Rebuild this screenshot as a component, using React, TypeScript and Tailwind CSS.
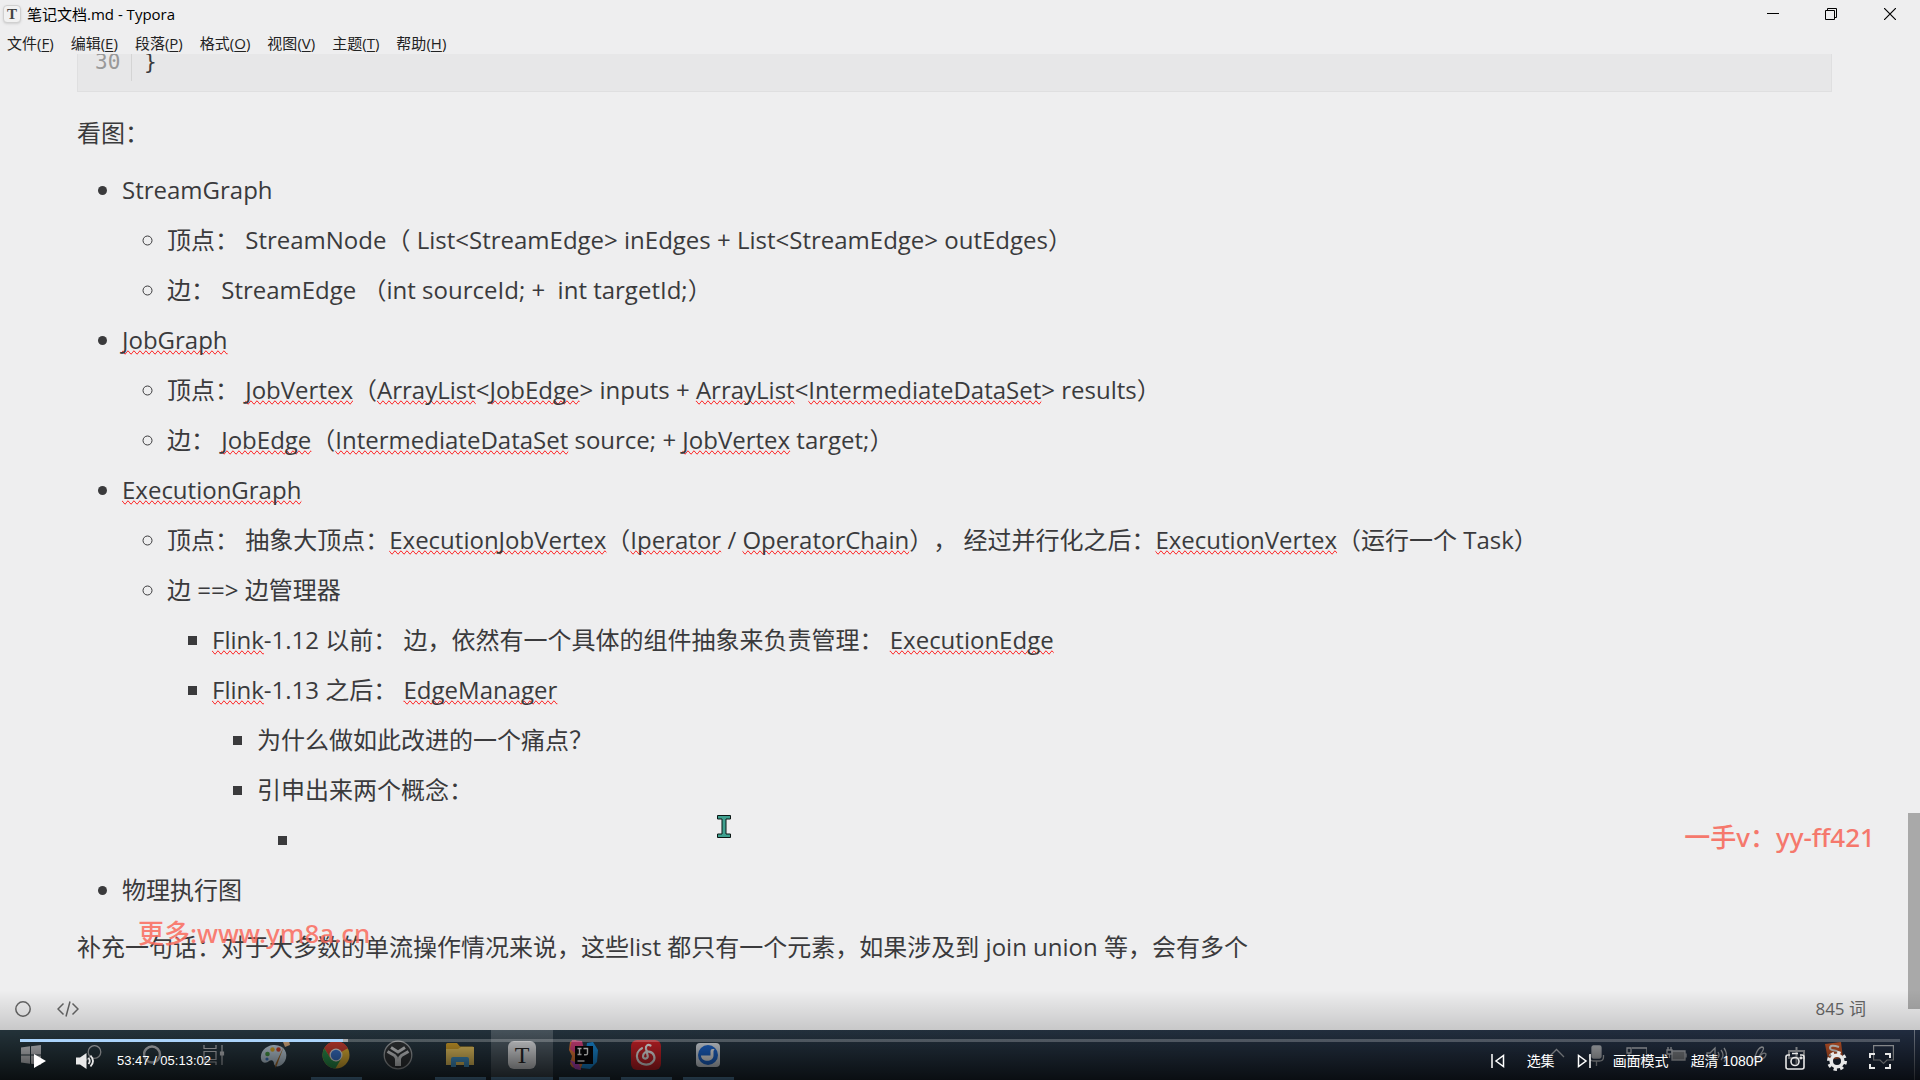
import React, { useState } from "react";

const Err = ({ children }: { children: React.ReactNode }) => (
  <span className="decoration-[#d8201c] [text-decoration-line:spelling-error]">{children}</span>
);

const menus: [string, string][] = [
  ["文件", "F"],
  ["编辑", "E"],
  ["段落", "P"],
  ["格式", "O"],
  ["视图", "V"],
  ["主题", "T"],
  ["帮助", "H"],
];

function TitleBar() {
  return (
    <header className="flex h-7 shrink-0 items-center justify-between pl-[3px]">
      <div className="flex items-center gap-1.5">
        <span className="flex size-[18px] items-center justify-center rounded border border-[#d0d0d0] bg-[#f1f1f1] font-['Liberation_Serif',serif] text-[15px] font-bold leading-none text-[#444] shadow-sm">
          T
        </span>
        <h1 className="text-[15px] leading-5 text-black">笔记文档.md - Typora</h1>
      </div>
      <div className="flex h-full">
        <button aria-label="最小化" className="flex w-[58px] items-center justify-center">
          <svg width="12" height="12" viewBox="0 0 12 12"><path d="M0 5.500h12" stroke="#000" /></svg>
        </button>
        <button aria-label="还原" className="flex w-[58px] items-center justify-center">
          <svg width="12" height="12" viewBox="0 0 12 12" fill="none" stroke="#000">
            <path d="M.5 2.500h9v9h-9zM2.500 2V.5h9v9H10" />
          </svg>
        </button>
        <button aria-label="关闭" className="flex w-[60px] items-center justify-center">
          <svg width="12" height="12" viewBox="0 0 12 12" stroke="#000" strokeWidth="1.200"><path d="M0 0l12 12M12 0L0 12" /></svg>
        </button>
      </div>
    </header>
  );
}

function MenuBar() {
  return (
    <nav className="flex h-[26px] shrink-0 items-center gap-[17px] pl-[7px] pt-1 text-[15px] leading-5 text-[#222]">
      {menus.map(([name, key]) => (
        <button key={key}>
          {name}(<span className="underline underline-offset-2">{key}</span>)
        </button>
      ))}
    </nav>
  );
}

const list = "flex flex-col gap-3 pl-[45px]";
const sub = "mt-3 flex flex-col gap-3 pl-[45px]";

function Document() {
  return (
    <article className="min-w-0 flex-1 overflow-hidden pl-[77px] pr-[76px] text-2xl leading-[38px] text-[#3a3a3c]">
      <pre className="flex border-x border-b border-[#dfdfe0] bg-[#e7e7e8] pb-[10px] font-['DejaVu_Sans_Mono',monospace] text-[21px] leading-4">
        <span className="w-[54px] border-r border-[#d4d4d4] pb-[11px] pl-[17px] text-[#999]">30</span>
        <code className="pl-3 font-['DejaVu_Sans_Mono',monospace]">{"}"}</code>
      </pre>
      <p className="mt-[22px]">看图：</p>
      <ul className={`${list} mt-[19px] list-disc`}>
        <li>
          StreamGraph
          <ul className={`${sub} list-[circle]`}>
            <li>顶点： StreamNode（ List&lt;StreamEdge&gt; inEdges + List&lt;StreamEdge&gt; outEdges）</li>
            <li>边： StreamEdge （int sourceId; + &nbsp;int targetId;）</li>
          </ul>
        </li>
        <li>
          <Err>JobGraph</Err>
          <ul className={`${sub} list-[circle]`}>
            <li>
              顶点： <Err>JobVertex</Err>（<Err>ArrayList</Err>&lt;<Err>JobEdge</Err>&gt; inputs + <Err>ArrayList</Err>&lt;
              <Err>IntermediateDataSet</Err>&gt; results）
            </li>
            <li>
              边： <Err>JobEdge</Err>（<Err>IntermediateDataSet</Err> source; + <Err>JobVertex</Err> target;）
            </li>
          </ul>
        </li>
        <li>
          <Err>ExecutionGraph</Err>
          <ul className={`${sub} list-[circle]`}>
            <li>
              顶点： 抽象大顶点：<Err>ExecutionJobVertex</Err>（<Err>Iperator</Err> / <Err>OperatorChain</Err>）， 经过并行化之后：
              <Err>ExecutionVertex</Err>（运行一个 Task）
            </li>
            <li>
              边 ==&gt; 边管理器
              <ul className={`${sub} list-[square]`}>
                <li>
                  <Err>Flink</Err>-1.12 以前： 边，依然有一个具体的组件抽象来负责管理： <Err>ExecutionEdge</Err>
                </li>
                <li>
                  <Err>Flink</Err>-1.13 之后： <Err>EdgeManager</Err>
                  <ul className={`${sub} list-[square]`}>
                    <li>为什么做如此改进的一个痛点？</li>
                    <li>
                      引申出来两个概念：
                      <ul className={`${sub} list-[square]`}>
                        <li>&nbsp;</li>
                      </ul>
                    </li>
                  </ul>
                </li>
              </ul>
            </li>
          </ul>
        </li>
        <li>物理执行图</li>
      </ul>
      <p className="mt-[19px]">补充一句话：对于大多数的单流操作情况来说，这些list 都只有一个元素，如果涉及到 join union 等，会有多个</p>
    </article>
  );
}

function StatusBar() {
  return (
    <footer className="flex h-[42px] shrink-0 items-center justify-between pl-[15px] pr-[42px] text-[#666]">
      <div className="flex items-center gap-[26px]">
        <button aria-label="大纲">
          <svg className="block" width="16" height="16" viewBox="0 0 16 16" fill="none" stroke="currentColor" strokeWidth="1.500"><circle cx="8" cy="8" r="7.200" /></svg>
        </button>
        <button aria-label="源代码模式">
          <svg className="block" width="22" height="16" viewBox="0 0 22 16" fill="none" stroke="currentColor" strokeWidth="1.500">
            <path d="M6.500 2.500L1 8l5.500 5.500M15.500 2.500L21 8l-5.500 5.500M13 .5L9 15.500" />
          </svg>
        </button>
      </div>
      <span className="text-[17px] leading-6">845 词</span>
    </footer>
  );
}

const apps = [
  {
    name: "Chrome",
    open: true,
    icon: (
      <svg width="28" height="28" viewBox="0 0 28 28">
        <circle cx="14" cy="14" r="13.500" fill="#f5c23a" />
        <path d="M14 14L2.300 7.250A13.500 13.500 0 0 1 25.700 7.250z" fill="#dc4437" />
        <path d="M14 7.500h12A13.500 13.500 0 0 0 2.300 7.250L8.400 17.300z" fill="#dc4437" />
        <path d="M2.300 7.250A13.500 13.500 0 0 0 13.400 27.500L19.500 17.300 14 20.500 8.400 17.300z" fill="#2f9e54" />
        <circle cx="14" cy="14" r="6.500" fill="#f2f2f2" />
        <circle cx="14" cy="14" r="5.200" fill="#3e7fe0" />
      </svg>
    ),
  },
  {
    name: "Yin",
    open: false,
    icon: (
      <svg width="30" height="30" viewBox="0 0 30 30" fill="none">
        <circle cx="15" cy="15" r="13.800" fill="#34383b" stroke="#a9aeb1" strokeWidth="1.300" />
        <g stroke="#dfe2e4" strokeWidth="3">
          <path d="M4.500 11.500l7 4q2 1.500 2 4V26M25.500 11.500l-7 4q-2 1.500-2 4V26M8 7.500l7 4.500 7-4.500" />
        </g>
      </svg>
    ),
  },
  {
    name: "文件资源管理器",
    open: true,
    icon: (
      <svg width="28" height="24" viewBox="0 0 28 24">
        <path d="M0 1.500Q0 0 1.500 0H11l3 3.500h12.500Q28 3.500 28 5v17H0z" fill="#e0ab2d" />
        <path d="M0 6h12l3-2h13v18H0z" fill="#fcd668" />
        <path d="M5 24v-8q0-2 2-2h14q2 0 2 2v8h-5v-5h-8v5z" fill="#4aa3dc" />
      </svg>
    ),
  },
  {
    name: "Typora",
    open: true,
    active: true,
    icon: (
      <span className="flex size-7 items-center justify-center rounded-md bg-[#eef0f3] font-['Liberation_Serif',serif] text-2xl leading-none text-[#2a2a2a]">T</span>
    ),
  },
  {
    name: "IntelliJ IDEA",
    open: true,
    icon: (
      <svg width="30" height="30" viewBox="0 0 30 30">
        <path d="M1 2l5-2 6 3 3 5v14l-4 8-8-3L1 24l2-8-3-6z" fill="#f4813a" />
        <path d="M3 0l10 1 2 8-9 4-5-4z" fill="#e8478b" />
        <path d="M18 3l6-1 5 8-1 12-7 7-9-1 4-10z" fill="#1b96ea" />
        <path d="M1 20l9 4 2 6-6-1z" fill="#c74bd0" />
        <rect x="6" y="6" width="18" height="18" fill="#08080c" />
        <path d="M8.500 8.500h4M10.500 8.500v6M8.500 14.500h4M14.500 8.500h4v5q0 1.200-1.500 1.200h-2M8.500 21h7" fill="none" stroke="#fff" strokeWidth="1.400" />
      </svg>
    ),
  },
  {
    name: "网易云音乐",
    open: true,
    icon: (
      <svg width="30" height="30" viewBox="0 0 30 30">
        <rect width="30" height="30" rx="6" fill="#e0252c" />
        <path d="M19.500 5.500c-3-1.500-5 .5-4.500 3l1.700 7.500c.6 3-4.700 4-4.700.2 0-3.200 3-5 5.800-4.500 5.700 1 7.200 6.500 4 10-4 4.500-13 3.700-15.300-2.500-1.600-4.700.5-9 4.500-11" fill="none" stroke="#fff" strokeWidth="2.200" strokeLinecap="round" />
      </svg>
    ),
  },
  {
    name: "Docker",
    open: true,
    icon: (
      <svg width="24" height="24" viewBox="0 0 24 24">
        <rect width="24" height="24" rx="4" fill="#e6edf5" />
        <circle cx="12" cy="12" r="10" fill="#1f6fe0" />
        <path d="M5 12.500h9.500V8q0-2 2-2h2l-1 2v4.500c0 7-12.500 7-12.500 0z" fill="#fff" />
      </svg>
    ),
  },
];

const system = [
  {
    name: "开始",
    icon: (
      <svg width="20" height="20" viewBox="0 0 20 20" fill="#d4d6da"><path d="M0 2.500l9-1.200v8.200H0zM10 1.200L20 0v9.500H10zM0 10.500h9v8.200l-9-1.200zM10 10.500h10V20l-10-1.200z" /></svg>
    ),
  },
  {
    name: "搜索",
    icon: (
      <svg width="20" height="20" viewBox="0 0 20 20" fill="none" stroke="#c9ccd0" strokeWidth="1.300"><circle cx="12.500" cy="7" r="6.300" /><path d="M8 11.500L.5 19" /></svg>
    ),
  },
  {
    name: "Cortana",
    icon: (
      <svg width="20" height="20" viewBox="0 0 20 20" fill="none" stroke="#c9ccd0" strokeWidth="2.500"><circle cx="9" cy="9.500" r="8" /></svg>
    ),
  },
  {
    name: "任务视图",
    icon: (
      <svg width="22" height="20" viewBox="0 0 22 20" fill="none" stroke="#c9ccd0" strokeWidth="1.200">
        <path d="M1 0v3.500h12V0M1 6.500h12v8H1zM1 20v-3h12v3M19 0v20" /><path d="M17.500 7h3v3h-3z" fill="#c9ccd0" />
      </svg>
    ),
  },
  {
    name: "画图",
    icon: (
      <svg width="30" height="28" viewBox="0 0 30 28">
        <path d="M13 4C5 5 0 11 1 18c1 5 6 4 8 2 3-2 5 0 5 3 1 4 8 3 11-3 4-8-1-17-12-16z" fill="#cfe2f1" />
        <circle cx="7.500" cy="13" r="2.300" fill="#4ca64c" /><circle cx="12.500" cy="8.500" r="2.200" fill="#e8b52c" /><circle cx="18.500" cy="8.500" r="2.200" fill="#d9482f" /><circle cx="7" cy="18" r="1.600" fill="#3f7fd0" />
        <path d="M24 5l-7 19-2 3 .5-4z" fill="#b8762c" /><path d="M23 1l6-1 1 4-5 2z" fill="#e8b98a" />
      </svg>
    ),
  },
];

const tray = [
  { name: "显示隐藏的图标", svg: <path d="M3 12l7.500-7.500L18 12" /> },
  { name: "麦克风", svg: <><rect x="6" y="1" width="9" height="12" rx="1.500" fill="#c9ccd0" /><path d="M3.500 10v2q0 4 4 4h6q4 0 4-4v-2M10.500 16v5" /></> },
  { name: "触摸键盘", svg: <><path d="M6 3h15v11H3" /><path d="M1 3h4v5H1zM3 8v8h10" /></> },
  { name: "电池", svg: <><path d="M6 6h13v9H6z" fill="#8b8f94" /><path d="M20 8.500v4M1 5h5v4H1zM2 2v3M5 2v3M3.500 9v4" /></> },
  { name: "音量", svg: <><path d="M1 8h3l5-5v14l-5-5H1z" /><path d="M12 7q2 3 0 6M15 5q4 5 0 10M18 3q5 7 0 14" /></> },
  { name: "手写", svg: <path d="M5 17q3-2 5-8t6-7q3 0 0 5t-6 7q-3 1-1-3M12 14q5-8 8-5 0 4-6 6" /> },
  { name: "输入法", svg: <><path d="M3 6h15v7H3zM10.500 2v17" strokeWidth="2" /></> },
];

function Taskbar() {
  return (
    <div className="flex h-[50px] shrink-0 justify-between bg-linear-to-r from-[#2a3c44] to-[#27344b]">
      <div className="flex">
        <div className="flex w-[305px]">
          {system.map((s) => (
            <button key={s.name} aria-label={s.name} className="flex flex-1 items-center justify-center">{s.icon}</button>
          ))}
        </div>
        {apps.map((a) => (
          <button key={a.name} aria-label={a.name} className={a.active ? "flex w-[62px] flex-col items-center bg-white/20" : "flex w-[62px] flex-col items-center"}>
            <span className="flex flex-1 items-center pt-[3px]">{a.icon}</span>
            <span className={a.active ? "h-[3px] w-full bg-[#76b9ed]" : a.open ? "h-[3px] w-[51px] bg-[#76b9ed]" : "h-[3px]"} />
          </button>
        ))}
      </div>
      <div className="flex items-stretch">
        {tray.map((t) => (
          <button key={t.name} aria-label={t.name} className="flex w-10 items-center justify-center">
            <svg width="21" height="21" viewBox="0 0 21 21" fill="none" stroke="#c4c8ce" strokeWidth="1.300">{t.svg}</svg>
          </button>
        ))}
        <button aria-label="搜狗输入法" className="flex w-9 items-center justify-center pb-2">
          <svg width="18" height="18" viewBox="0 0 18 18"><path d="M0 2l16-2 2 16-15 2z" fill="#e2622f" /><path d="M14 5q-9-3-9 1 0 2 4.500 2.500T13 12q-1 3-9 1" fill="none" stroke="#fff" strokeWidth="2" /></svg>
        </button>
        <button aria-label="通知" className="flex w-[62px] items-center justify-center">
          <svg width="21" height="20" viewBox="0 0 21 20" fill="none" stroke="#c9ccd0" strokeWidth="1.200"><path d="M.6.6h19.800V15h-6.400l-3.500 3.500L7 15H.6z" /></svg>
        </button>
        <span className="w-[6px] border-l border-white/40" />
      </div>
    </div>
  );
}

function Player() {
  const [time, setTime] = useState(3227);
  const total = 18782;
  const p = (time / total) * 100;
  return (
    <div className="absolute inset-x-0 bottom-0 flex h-[100px] flex-col justify-end bg-linear-to-b from-transparent from-10% via-black/16 to-black/75 text-white">
      <input
        type="range"
        aria-label="播放进度"
        min={0}
        max={total}
        value={time}
        onChange={(e) => setTime(Number(e.target.value))}
        className="mx-5 block h-[3px] appearance-none [&::-webkit-slider-thumb]:size-0 [&::-webkit-slider-thumb]:appearance-none"
        style={{ background: `linear-gradient(to right, #abd4fb ${p}%, #aaadb0 ${p}%, #aaadb0 ${p + 0.27}%, rgba(255,255,255,.22) ${p + 0.27}%)` }}
      />
      <div className="flex h-[38px] items-center justify-between pl-[34px] pr-[29px] font-['Liberation_Sans','Noto_Sans_CJK_SC',sans-serif] text-sm leading-5">
        <div className="flex items-center">
          <button aria-label="播放"><svg className="block" width="12" height="14" viewBox="0 0 12 14" fill="#fff"><path d="M0 0l12 7-12 7z" /></svg></button>
          <button aria-label="静音" className="ml-[30px]">
            <svg className="block" width="20" height="16" viewBox="0 0 20 16" fill="#e8e8e8"><path d="M0 4.500h4L10.500 0v16L4 11.500H0z" /><path d="M12.500 5q2.500 3 0 6M14.500 2.500q5 5.500 0 11" fill="none" stroke="#e8e8e8" strokeWidth="1.800" /></svg>
          </button>
          <span className="ml-[21px] text-[13px]">53:47 / 05:13:02</span>
        </div>
        <div className="flex items-center gap-[22px]">
          <button aria-label="上一集"><svg className="block" width="14" height="14" viewBox="0 0 14 14" fill="none" stroke="#fff" strokeWidth="1.500"><path d="M1 0v14M12.500 1.500v11L5 7z" /></svg></button>
          <button>选集</button>
          <button aria-label="下一集"><svg className="block" width="14" height="14" viewBox="0 0 14 14" fill="none" stroke="#fff" strokeWidth="1.500"><path d="M13 0v14M1.500 1.500v11L9 7z" /></svg></button>
          <button>画面模式</button>
          <button>超清 1080P</button>
          <button aria-label="截图"><svg className="block" width="20" height="18" viewBox="0 0 20 18" fill="none" stroke="#e8e8e8" strokeWidth="1.600"><path d="M5 3H3Q1 3 1 5v10q0 2 2 2h14q2 0 2-2V5q0-2-2-2h-2M7 1.500h6" /><circle cx="10" cy="9.500" r="4" /><circle cx="16" cy="6" r=".6" /></svg></button>
          <button aria-label="设置">
            <svg className="block" width="20" height="20" viewBox="0 0 20 20" fill="none" stroke="#e8e8e8">
              <circle cx="10" cy="10" r="5.800" strokeWidth="3.600" />
              <circle cx="10" cy="10" r="8.500" strokeWidth="3" strokeDasharray="3.340 3.340" />
            </svg>
          </button>
          <button aria-label="全屏"><svg className="block" width="22" height="16" viewBox="0 0 22 16" fill="none" stroke="#e8e8e8" strokeWidth="2"><path d="M1 5V1h5M16 1h5v4M21 11v4h-5M6 15H1v-4" /></svg></button>
        </div>
      </div>
    </div>
  );
}

export default function App() {
  return (
    <div className="relative flex h-screen flex-col overflow-hidden bg-[#eeeeef] font-['Open_Sans','Noto_Sans_CJK_SC',sans-serif] [text-spacing-trim:space-all]" lang="zh-CN">
      <TitleBar />
      <MenuBar />
      <main className="flex min-h-0 flex-1">
        <div className="flex min-w-0 flex-1 flex-col">
          <Document />
          <StatusBar />
        </div>
        <div className="flex w-3 flex-col justify-end pb-[21px]">
          <div className="h-[196px] bg-[#a9a9a9]" />
        </div>
      </main>
      <Taskbar />
      <svg className="absolute left-[717px] top-[815px]" width="14" height="23" viewBox="0 0 14 23">
        <path d="M.5.5h13v3.500h-4.500v15h4.500v3.500H.5V19H5V4H.5z" fill="#3fa08f" stroke="#0b1614" />
      </svg>
      <span className="absolute left-[138px] top-[915px] font-['Noto_Sans','Noto_Sans_CJK_SC',sans-serif] text-[26px] font-medium leading-9 text-[#fb6a5c]/85">更多:www.ym8a.cn</span>
      <span className="absolute right-[45px] top-[819px] font-['Noto_Sans','Noto_Sans_CJK_SC',sans-serif] text-[26px] font-medium leading-9 text-[#f5786c]">一手v：yy-ff421</span>
      <Player />
    </div>
  );
}
